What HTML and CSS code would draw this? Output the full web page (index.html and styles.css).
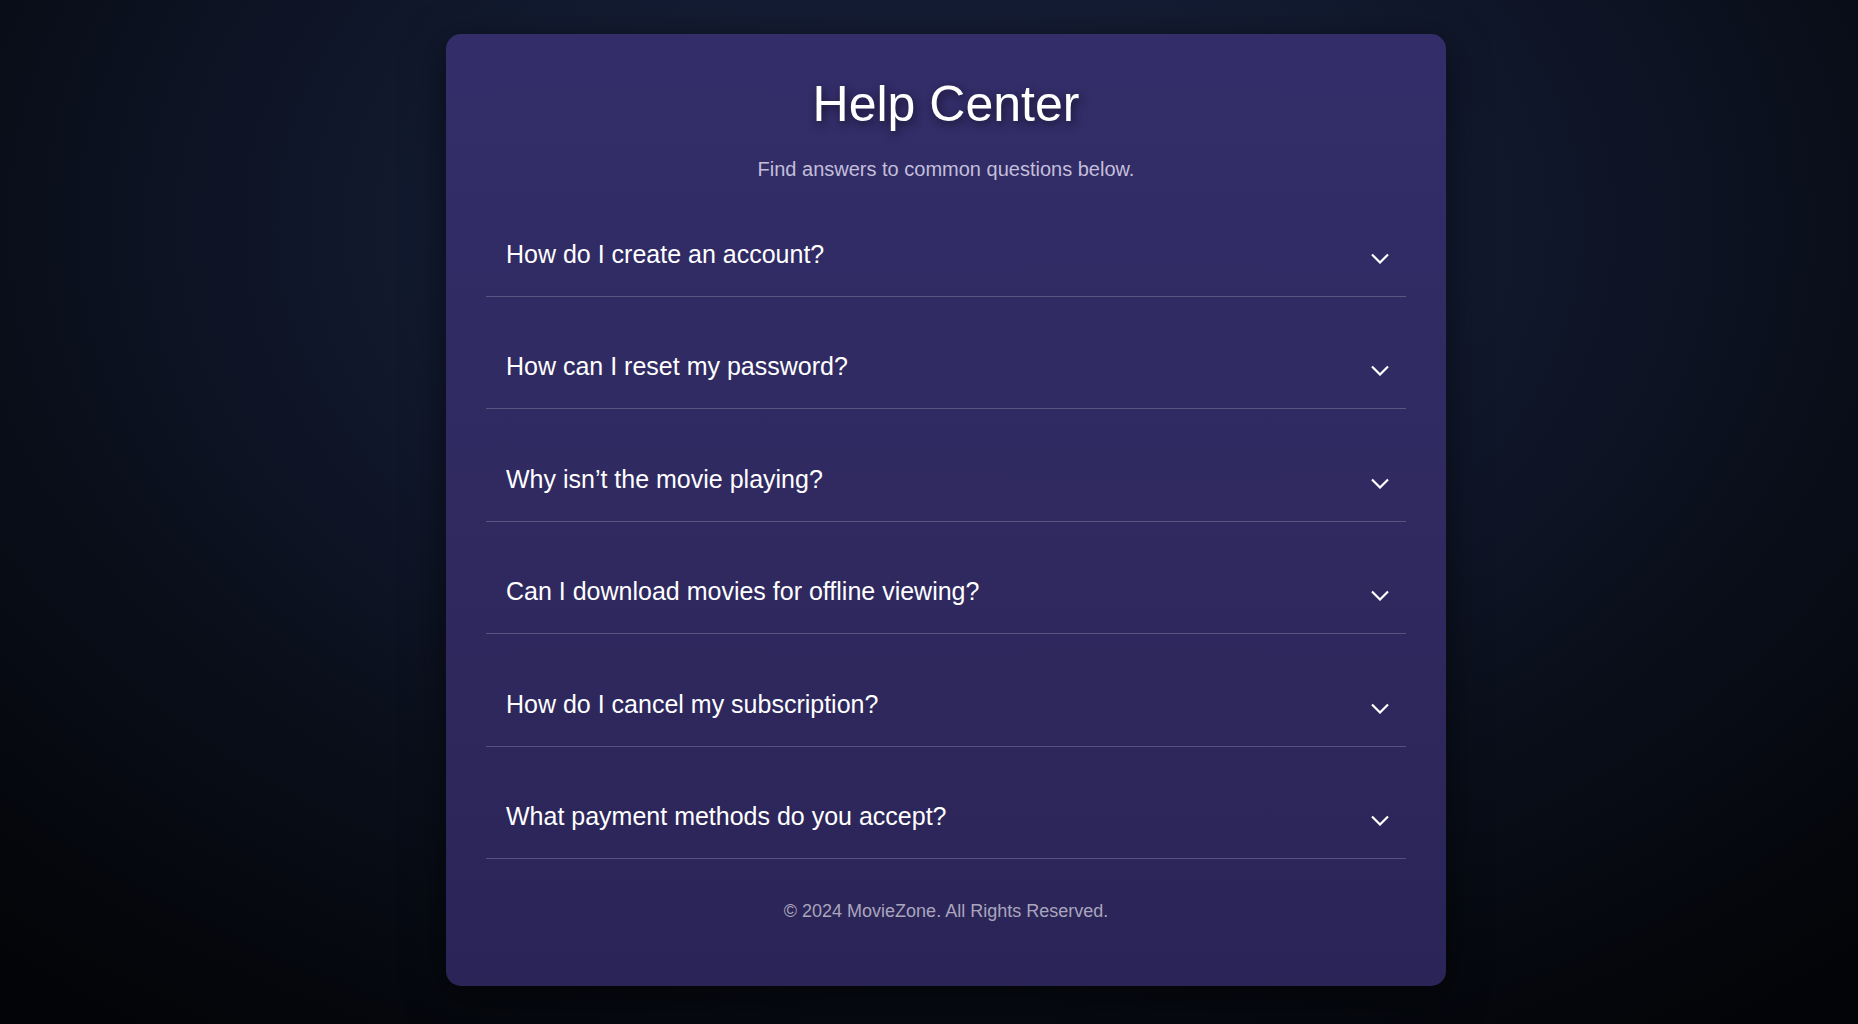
FILE: index.html
```html
<!DOCTYPE html>
<html lang="en">
<head>
<meta charset="utf-8">
<title>Help Center - MovieZone</title>
<link rel="stylesheet" href="styles.css">
</head>
<body>
<div class="page">
  <main class="card">
    <h1 class="title">Help Center</h1>
    <p class="subtitle">Find answers to common questions below.</p>
    <div class="faq">
      <div class="item">
        <div class="question"><span>How do I create an account?</span><svg class="chev" width="18" height="11" viewBox="0 0 18 11"><polyline points="1,1.5 9,9.5 17,1.5" /></svg></div>
      </div>
      <div class="item">
        <div class="question"><span>How can I reset my password?</span><svg class="chev" width="18" height="11" viewBox="0 0 18 11"><polyline points="1,1.5 9,9.5 17,1.5" /></svg></div>
      </div>
      <div class="item">
        <div class="question"><span>Why isn’t the movie playing?</span><svg class="chev" width="18" height="11" viewBox="0 0 18 11"><polyline points="1,1.5 9,9.5 17,1.5" /></svg></div>
      </div>
      <div class="item">
        <div class="question"><span>Can I download movies for offline viewing?</span><svg class="chev" width="18" height="11" viewBox="0 0 18 11"><polyline points="1,1.5 9,9.5 17,1.5" /></svg></div>
      </div>
      <div class="item">
        <div class="question"><span>How do I cancel my subscription?</span><svg class="chev" width="18" height="11" viewBox="0 0 18 11"><polyline points="1,1.5 9,9.5 17,1.5" /></svg></div>
      </div>
      <div class="item">
        <div class="question"><span>What payment methods do you accept?</span><svg class="chev" width="18" height="11" viewBox="0 0 18 11"><polyline points="1,1.5 9,9.5 17,1.5" /></svg></div>
      </div>
    </div>
    <footer class="footer">© 2024 MovieZone. All Rights Reserved.</footer>
  </main>
</div>
</body>
</html>
```

FILE: styles.css
```css
* { box-sizing: border-box; }

html, body {
  margin: 0;
  padding: 0;
  height: 100%;
}

body {
  font-family: "Liberation Sans", Arial, sans-serif;
  color: #ffffff;
  background: radial-gradient(ellipse 75% 95% at 50% 22%, #17203b 0%, #121a30 35%, #0a0f1b 65%, #030407 100%);
  overflow: hidden;
}

.page {
  display: flex;
  justify-content: center;
  padding: 34px 0 0 34px;
}

.card {
  width: 1000px;
  padding: 40px 40px 64px;
  border-radius: 15px;
  background: linear-gradient(180deg, #332d69 0%, #302a61 50%, #2b2457 100%);
  box-shadow: 0 10px 40px rgba(0, 0, 0, 0.55);
}

.title {
  margin: 2px 0 0;
  font-size: 50px;
  font-weight: normal;
  text-align: center;
  line-height: 57px;
  text-shadow: 2px 3px 8px rgba(0, 0, 0, 0.55);
}

.subtitle {
  margin: 25px 0 32px;
  font-size: 20px;
  line-height: 23px;
  text-align: center;
  color: #c3bfdb;
}

.item {
  border-bottom: 1px solid rgba(255, 255, 255, 0.2);
  margin-bottom: 28.4px;
}

.question {
  display: flex;
  justify-content: space-between;
  align-items: center;
  padding: 27px 17px 27px 20px;
  font-size: 25px;
  line-height: 29px;
}

.chev {
  margin-top: 8px;
  fill: none;
  stroke: #ffffff;
  stroke-width: 2.2;
}

.footer {
  margin-top: 0;
  padding-top: 14px;
  text-align: center;
  font-size: 18px;
  line-height: 21px;
  color: #aaa6be;
}
```
